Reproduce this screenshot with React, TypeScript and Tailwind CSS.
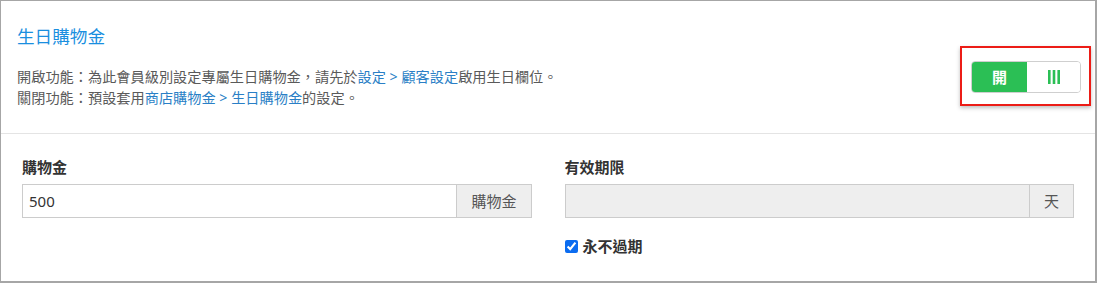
import React, { useState } from 'react';

const font = { fontFamily: '"Noto Sans", "Noto Sans CJK TC", sans-serif' };

const Bars = () => (
  <svg width="12" height="14" viewBox="0 0 12 14">
    <rect x="0" y="0" width="2.6" height="14" fill="#2bbf55" />
    <rect x="4.7" y="0" width="2.6" height="14" fill="#2bbf55" />
    <rect x="9.4" y="0" width="2.6" height="14" fill="#2bbf55" />
  </svg>
);

export default function App() {
  const [amount, setAmount] = useState('500');
  const [never, setNever] = useState(true);

  return (
    <div
      className="w-[1097px] h-[283px] bg-white border border-[#a6a6a6] border-r-2 border-b-2 flex flex-col overflow-hidden"
      style={font}
    >
      {/* Header */}
      <div className="flex items-start justify-between pl-[16px] pr-[4px] h-[133px] border-b border-[#e4e4e4]">
        <div>
          <h2 className="mt-[22px] text-[17.6px] leading-[26px] text-[#1a8fdf]">生日購物金</h2>
          <div className="mt-[17px] text-[14.2px] leading-[21px] text-[#5a5a5a]">
            <p>
              開啟功能：為此會員級別設定專屬生日購物金，請先於
              <a className="text-[#2a7fc6]">設定 &gt; 顧客設定</a>
              啟用生日欄位。
            </p>
            <p>
              關閉功能：預設套用<a className="text-[#2a7fc6]">商店購物金 &gt; 生日購物金</a>的設定。
            </p>
          </div>
        </div>

        {/* Toggle (highlighted) */}
        <div className="mt-[45px] border-2 border-[#ec1c16] pl-[9px] pr-[8px] pt-[13px] pb-[11px] shadow-[0_2px_4px_rgba(0,0,0,0.25)]">
          <div className="flex w-[110px] h-[32px] rounded-[4px] border border-[#cfcfcf] overflow-hidden">
            <div className="w-[55px] h-full bg-[#2bbf55] flex items-center justify-center text-white font-bold text-[15px]">
              開
            </div>
            <div className="flex-1 h-full bg-white flex items-center justify-center">
              <Bars />
            </div>
          </div>
        </div>
      </div>

      {/* Fields */}
      <div className="grid grid-cols-2 gap-x-[33px] px-[21px] pt-[22px]">
        <div>
          <label className="block text-[15px] leading-[22px] font-bold text-[#333] mb-[6px]">購物金</label>
          <div className="flex h-[34px] border border-[#cccccc]">
            <input
              value={amount}
              onChange={e => setAmount(e.target.value)}
              className="flex-1 min-w-0 px-[6px] text-[15px] text-[#333] outline-none bg-white"
              style={font}
            />
            <span className="flex items-center px-[14px] bg-[#eeeeee] border-l border-[#cccccc] text-[15px] text-[#555]">
              購物金
            </span>
          </div>
        </div>

        <div>
          <label className="block text-[15px] leading-[22px] font-bold text-[#333] mb-[6px]">有效期限</label>
          <div className="flex h-[34px] border border-[#cccccc]">
            <input
              disabled
              className="flex-1 min-w-0 px-[6px] text-[15px] outline-none bg-[#eeeeee]"
              style={font}
            />
            <span className="flex items-center px-[14px] bg-[#eeeeee] border-l border-[#cccccc] text-[15px] text-[#555]">
              天
            </span>
          </div>
          <label className="mt-[17px] flex items-center gap-[5px] text-[15px] leading-[22px] font-bold text-[#333]">
            <input
              type="checkbox"
              checked={never}
              onChange={e => setNever(e.target.checked)}
              className="w-[13px] h-[13px] m-0 accent-[#0b6cf0]"
            />
            永不過期
          </label>
        </div>
      </div>
    </div>
  );
}
